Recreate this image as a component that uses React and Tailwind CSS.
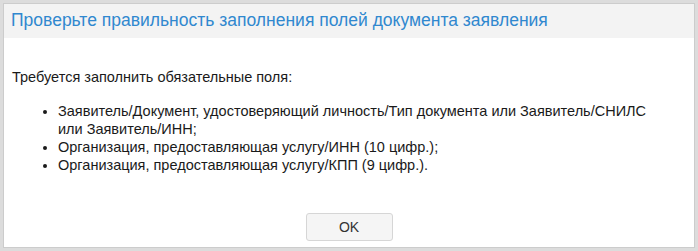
import React from "react";

const App = () => {
  return (
    <div className="w-[698px] h-[251px] bg-[#dcdcdc] p-[3px] font-['Liberation_Sans',Arial,sans-serif]">
      <div className="h-full flex flex-col bg-white border border-[#cccccc]">
        <div className="h-[34px] bg-[#f3f3f3] flex items-center px-[7px]">
          <h2 className="text-[17.5px] text-[#3088cf] leading-none">
            Проверьте правильность заполнения полей документа заявления
          </h2>
        </div>
        <div className="flex-1 flex flex-col px-[8px] pb-[6px] text-[14.5px] text-[#1a1a1a] leading-[18px]">
          <p className="mt-[30px]">Требуется заполнить обязательные поля:</p>
          <ul className="mt-[16px] list-disc pl-[46px] pr-[4px]">
            <li>
              Заявитель/Документ, удостоверяющий личность/Тип документа или
              Заявитель/СНИЛС
              <br />
              или Заявитель/ИНН;
            </li>
            <li>Организация, предоставляющая услугу/ИНН (10 цифр.);</li>
            <li>Организация, предоставляющая услугу/КПП (9 цифр.).</li>
          </ul>
          <div className="flex justify-center mt-auto">
            <button className="w-[87px] h-[28px] bg-[#f5f5f5] border border-[#d6d6d6] rounded-[3px] text-[14px] text-[#333]">
              OK
            </button>
          </div>
        </div>
      </div>
    </div>
  );
};

export default App;
